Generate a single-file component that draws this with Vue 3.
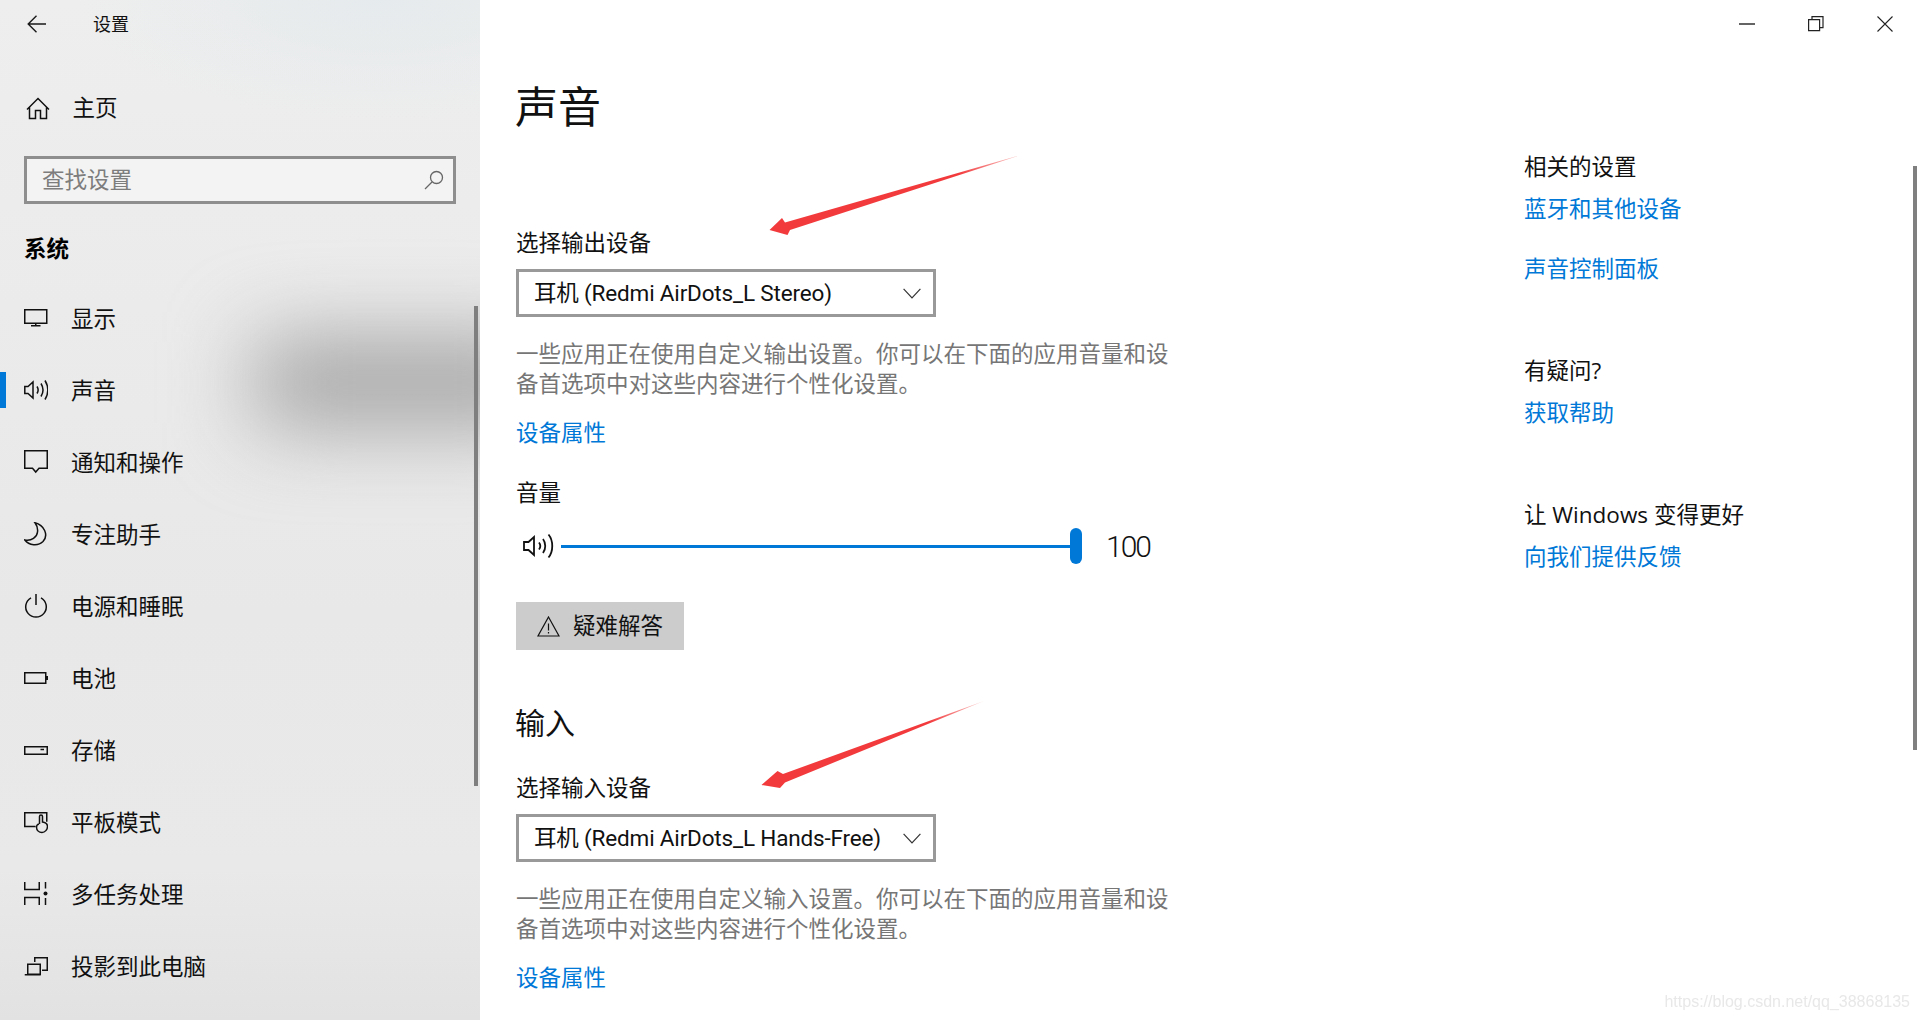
<template>
  <div class="window">
    <aside class="sidebar">
      <div class="blob"></div>
      <div class="app-bar">
        <svg class="back" width="20" height="18" viewBox="0 0 20 18" fill="none" stroke="#1a1a1a" stroke-width="1.4">
          <path d="M9.5.8 1.2 9l8.3 8.2M1.2 9H19" />
        </svg>
        <span>设置</span>
      </div>
      <div class="nav-row home">
        <svg class="nav-icon" viewBox="0 0 24 24" fill="none" stroke="#111" stroke-width="1.5">
          <path d="M1 13.5 12 2.5l11 11M3.5 11.5v11h6v-8h5v8h6v-11" />
        </svg>
        <span>主页</span>
      </div>
      <div class="search">
        <span>查找设置</span>
        <svg width="20" height="20" viewBox="0 0 20 20" fill="none" stroke="#666" stroke-width="1.3">
          <circle cx="12.5" cy="7.5" r="6" />
          <path d="M8 12 1 19" />
        </svg>
      </div>
      <div class="group-title">系统</div>
      <div v-for="item in navItems" :key="item.label" class="nav-row" :class="{ active: item.active }">
        <svg class="nav-icon" viewBox="0 0 24 24" fill="none" stroke="#111" stroke-width="1.5">
          <path :d="item.icon" />
          <circle v-if="item.dot" cx="21.5" cy="11.5" r="2" fill="#111" stroke="none" />
        </svg>
        <span class="nav-text">{{ item.label }}</span>
      </div>
      <div class="side-scroll"></div>
    </aside>

    <main class="main">
      <div class="titlebar">
        <div class="win-btn">
          <svg width="16" height="16" viewBox="0 0 16 16" stroke="#222" stroke-width="1.4"><path d="M0 8h16" /></svg>
        </div>
        <div class="win-btn">
          <svg width="16" height="16" viewBox="0 0 16 16" fill="none" stroke="#222" stroke-width="1.2"><path d="M4 3V.6h11v11h-3" /><path d="M.6 3.6h11v11H.6z" /></svg>
        </div>
        <div class="win-btn">
          <svg width="16" height="16" viewBox="0 0 16 16" stroke="#222" stroke-width="1.1"><path d="m.5.5 15 15M15.500.5l-15 15" /></svg>
        </div>
      </div>

      <div class="body">
        <section class="content">
          <h1>声音</h1>

          <div class="label first">选择输出设备</div>
          <div class="select">
            <span>耳机 (Redmi AirDots_L Stereo)</span>
            <svg width="18" height="11" viewBox="0 0 18 11" fill="none" stroke="#333" stroke-width="1.2"><path d="m.6.8 8.400 9 8.400-9" /></svg>
          </div>
          <p class="desc">一些应用正在使用自定义输出设置。你可以在下面的应用音量和设备首选项中对这些内容进行个性化设置。</p>
          <a class="link prop">设备属性</a>

          <div class="label volume-label">音量</div>
          <div class="volume">
            <svg width="32" height="26" viewBox="0 0 32 26" fill="none" stroke="#111" stroke-width="1.8">
              <path d="M1 9h4.500L11 4v18l-5.500-5H1z" />
              <path d="M16 9.500c1.500 2 1.500 5 0 7M20 6c3 4 3 10 0 14M25.500 1.500c5 6 5 17 0 23" />
            </svg>
            <div class="track"><div class="thumb"></div></div>
            <span class="value">100</span>
          </div>

          <div class="trouble">
            <svg width="23" height="21" viewBox="0 0 23 21" fill="none" stroke="#111" stroke-width="1.2">
              <path d="M11.500 1 22 20H1z" />
              <path d="M11.500 7.500v7M11.500 16v1.600" />
            </svg>
            <span>疑难解答</span>
          </div>

          <h2>输入</h2>
          <div class="label input-label">选择输入设备</div>
          <div class="select">
            <span>耳机 (Redmi AirDots_L Hands-Free)</span>
            <svg width="18" height="11" viewBox="0 0 18 11" fill="none" stroke="#333" stroke-width="1.2"><path d="m.6.8 8.400 9 8.400-9" /></svg>
          </div>
          <p class="desc">一些应用正在使用自定义输入设置。你可以在下面的应用音量和设备首选项中对这些内容进行个性化设置。</p>
          <a class="link prop">设备属性</a>
        </section>

        <section class="related">
          <div class="rel-title">相关的设置</div>
          <a class="link rel-link">蓝牙和其他设备</a>
          <a class="link rel-link second">声音控制面板</a>
          <div class="rel-title gap">有疑问?</div>
          <a class="link rel-link">获取帮助</a>
          <div class="rel-title gap">让 Windows 变得更好</div>
          <a class="link rel-link">向我们提供反馈</a>
        </section>
      </div>

      <div class="main-scroll"></div>
    </main>

    <!-- 截图上的红色标注箭头 -->
    <svg class="arrows" width="1920" height="1020" viewBox="0 0 1920 1020">
      <defs>
        <linearGradient id="fade1" gradientUnits="userSpaceOnUse" x1="769" y1="230" x2="1021" y2="155">
          <stop offset="0.75" stop-color="#f23a3c" />
          <stop offset="1" stop-color="#f23a3c" stop-opacity="0.25" />
        </linearGradient>
        <linearGradient id="fade2" gradientUnits="userSpaceOnUse" x1="761" y1="785" x2="984" y2="701">
          <stop offset="0.75" stop-color="#f23a3c" />
          <stop offset="1" stop-color="#f23a3c" stop-opacity="0.25" />
        </linearGradient>
      </defs>
      <path d="M769.500 230 782 218 785 222.500 1021 155 790 230 787.500 235z" fill="url(#fade1)" />
      <path d="M761.500 785 777.500 771 783 774 984 701 785 782.500 780 788z" fill="url(#fade2)" />
    </svg>

    <div class="watermark">https://blog.csdn.net/qq_38868135</div>
  </div>
</template>

<script setup>
// 左侧导航项，icon 是 24x24 画布上的路径
const navItems = [
  { label: '显示', icon: 'M.75 3.750h22v13.500H.75zM11.750 17.250v2.500M7 19.750h9.500' },
  { label: '声音', active: true, icon: 'M.8 8.500h3.200L9 4v16l-5-4.500H.8zM13 8.500c1.300 2 1.300 5 0 7M17 5.500c2.500 4 2.500 9 0 13M21 2.500c3.600 6 3.600 13 0 19' },
  { label: '通知和操作', icon: 'M.75.75h22.500v17.500H15L11.750 22 8.500 18.250H.75z' },
  { label: '专注助手', icon: 'M11 .8C20 3 25 13 19 19.500 14 24.500 5 23.500.8 18 7.500 19.500 13 15 13.500 10 14 6.500 13 3.500 11 .8z' },
  { label: '电源和睡眠', icon: 'M7 3.800a10.300 10.300 0 1 0 10 0M12 0v11' },
  { label: '电池', icon: 'M.75 6.750h21v10.500H.75zM23.250 10v4' },
  { label: '存储', icon: 'M.75 8.750h22.500v7.500H.75zM16.500 11.500h3.500' },
  { label: '平板模式', icon: 'M11.500 16.500H.75V2.750h22v9M15.500 14V6.500c0-2 3-2 3 0V12c3 .5 5 1.500 5 4.500 0 3-2.500 6-5.500 6s-5.500-2-5.500-5.500c0-1.500.8-2.500 2.500-3' },
  { label: '多任务处理', dot: true, icon: 'M.75 0v7.500h14.500V0M.75 23v-7.500h14.500V23M21.500 0v6.500M21.500 16v7' },
  { label: '投影到此电脑', icon: 'M10.750 8V3.750h12.500v12.500H18M3.750 10.250h12.500v10H3.750zM.75 20.750h16' }
]
</script>

<style>
html, body { margin: 0; background: #fff; }
</style>

<style scoped>
.window {
  position: relative;
  display: flex;
  width: 1920px;
  height: 1020px;
  overflow: hidden;
  background: #fff;
  color: #111;
  font-family: "Open Sans", "Noto Sans CJK SC", sans-serif;
  font-size: 22.5px;
  line-height: 30px;
}

/* 侧边栏 */
.sidebar {
  position: relative;
  flex: none;
  width: 480px;
  height: 1020px;
  overflow: hidden;
  background:
    radial-gradient(ellipse 300px 120px at 380px 0, rgba(226, 233, 236, .7), rgba(226, 233, 236, 0)),
    linear-gradient(180deg, #eeeeee 0%, #ebebeb 30%, #e8e8e8 60%, #e9e9e9 85%, #e2e2e2 100%);
}

.blob {
  position: absolute;
  left: 255px;
  top: 340px;
  width: 300px;
  height: 85px;
  background: #a2a2a2;
  filter: blur(42px);
}

.app-bar {
  position: relative;
  display: flex;
  align-items: center;
  height: 48px;
  font-size: 18px;
}

.back {
  margin: 0 46px 0 27px;
}

.nav-row {
  position: relative;
  display: flex;
  align-items: center;
  height: 72px;
  padding-left: 24px;
}

.home {
  margin-top: 24px;
  padding-left: 26px;
}

.nav-icon {
  flex: none;
  width: 24px;
  height: 24px;
  margin-right: 23px;
}

.home .nav-icon {
  margin-right: 22.5px;
}

.nav-text {
  padding-top: 2px;
}

.active::before {
  content: "";
  position: absolute;
  left: 0;
  top: 18px;
  width: 6px;
  height: 36px;
  background: #0078d7;
}

.search {
  position: relative;
  display: flex;
  align-items: center;
  justify-content: space-between;
  box-sizing: border-box;
  width: 432px;
  height: 48px;
  margin: 12px 0 0 24px;
  padding: 0 9px 0 15px;
  border: 3px solid #8e8e8e;
  background: #f3f3f3;
  color: #7d7d7d;
}

.group-title {
  position: relative;
  margin: 30px 0 18px 24px;
  font-weight: 700;
  color: #000;
}

.side-scroll {
  position: absolute;
  left: 474px;
  top: 306px;
  width: 4px;
  height: 480px;
  background: #7f7f7f;
}

/* 主区域 */
.main {
  position: relative;
  flex: 1;
}

.titlebar {
  display: flex;
  justify-content: flex-end;
  height: 48px;
  padding-right: 1px;
}

.win-btn {
  display: flex;
  align-items: center;
  justify-content: center;
  width: 69px;
}

.body {
  display: flex;
}

.content {
  flex: none;
  box-sizing: border-box;
  width: 1044px;
  padding-left: 36px;
}

h1 {
  margin: 29px 0 0 -1px;
  font-size: 43px;
  font-weight: 400;
  line-height: 60px;
}

h2 {
  margin: 51px 0 0 -1px;
  font-size: 30px;
  font-weight: 400;
  line-height: 44px;
}

.label {
  margin-top: 28px;
}

.label.first {
  margin-top: 91px;
}

.select {
  display: flex;
  align-items: center;
  justify-content: space-between;
  box-sizing: border-box;
  width: 420px;
  height: 48px;
  margin-top: 11px;
  padding: 0 12px 0 15px;
  border: 3px solid #999;
  font-family: Roboto, "Noto Sans CJK SC", sans-serif;
  letter-spacing: -.17px;
}

.desc {
  width: 660px;
  margin: 22px 0 0;
  color: #767676;
}

.link {
  display: block;
  color: #0078d7;
}

.prop {
  margin-top: 19px;
}

.volume-label {
  margin-top: 30px;
}

.volume {
  display: flex;
  align-items: center;
  height: 40px;
  margin-top: 18px;
  padding-left: 7px;
}

.track {
  position: relative;
  width: 521px;
  height: 3px;
  margin-left: 6px;
  background: #0078d7;
}

.thumb {
  position: absolute;
  right: 0;
  top: -17px;
  width: 12px;
  height: 36px;
  border-radius: 6px;
  background: #0078d7;
}

.value {
  margin-left: 24px;
  padding-top: 2px;
  font-family: Roboto, sans-serif;
  font-size: 30px;
  font-weight: 300;
  letter-spacing: -2px;
}

.trouble {
  display: flex;
  align-items: center;
  gap: 13px;
  box-sizing: border-box;
  width: 168px;
  height: 48px;
  margin-top: 36px;
  padding-left: 21px;
  background: #ccc;
}

.related {
  padding-top: 104px;
}

.rel-title {
  color: #111;
}

.rel-title.gap {
  margin-top: 72px;
}

.rel-link {
  margin-top: 12px;
}

.rel-link.second {
  margin-top: 30px;
}

.main-scroll {
  position: absolute;
  right: 3px;
  top: 166px;
  width: 4px;
  height: 584px;
  background: #7f7f7f;
}

.arrows {
  position: absolute;
  left: 0;
  top: 0;
  pointer-events: none;
}

.watermark {
  position: absolute;
  right: 10px;
  bottom: 6px;
  font-family: "Liberation Sans", sans-serif;
  font-size: 16px;
  line-height: 24px;
  color: #e8e8e8;
  filter: blur(.4px);
}
</style>
